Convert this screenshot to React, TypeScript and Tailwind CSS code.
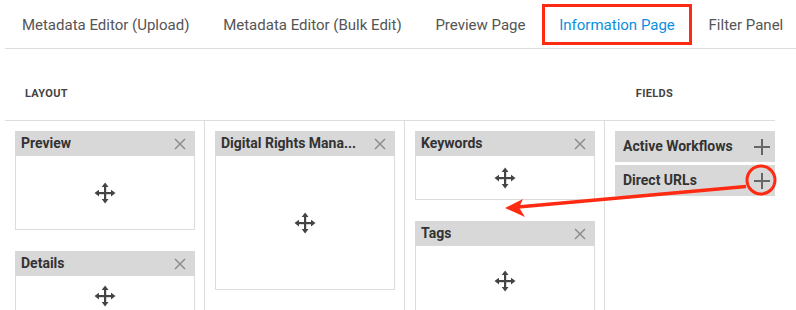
import { ReactNode } from "react";

const tabs = [
  "Metadata Editor (Upload)",
  "Metadata Editor (Bulk Edit)",
  "Preview Page",
  "Information Page",
  "Filter Panel",
];

function MoveIcon() {
  return (
    <svg width="22" height="22" viewBox="0 0 22 22" fill="#444">
      <rect x="10" y="4" width="2.2" height="14" />
      <rect x="4" y="10" width="14" height="2.2" />
      <polygon points="11.1,0.5 14.5,5 7.7,5" />
      <polygon points="11.1,21.5 14.5,17 7.7,17" />
      <polygon points="0.5,11.1 5,7.7 5,14.5" />
      <polygon points="21.5,11.1 17,7.7 17,14.5" />
    </svg>
  );
}

function CloseIcon() {
  return (
    <svg width="12" height="12" viewBox="0 0 12 12" stroke="#8a8a8a" strokeWidth="1.4">
      <line x1="1" y1="1" x2="11" y2="11" />
      <line x1="11" y1="1" x2="1" y2="11" />
    </svg>
  );
}

function PlusIcon() {
  return (
    <svg width="18" height="18" viewBox="0 0 18 18" stroke="#666" strokeWidth="2">
      <line x1="9" y1="1" x2="9" y2="17" />
      <line x1="1" y1="9" x2="17" y2="9" />
    </svg>
  );
}

function Card({ title, bodyHeight, children }: { title: string; bodyHeight: string; children?: ReactNode }) {
  return (
    <div className="w-[180px]">
      <div className="h-[25px] bg-[#d8d8d8] flex items-center justify-between pl-[6px] pr-[9px]">
        <span className="text-[14px] font-bold text-[#333] truncate">{title}</span>
        <CloseIcon />
      </div>
      <div className={`border border-t-0 border-[#dcdcdc] flex items-center justify-center ${bodyHeight}`}>
        {children ?? <MoveIcon />}
      </div>
    </div>
  );
}

function FieldItem({ label }: { label: string }) {
  return (
    <div className="h-[31px] bg-[#d8d8d8] flex items-center justify-between pl-[8px] pr-[4px]">
      <span className="text-[14px] font-bold text-[#333]">{label}</span>
      <PlusIcon />
    </div>
  );
}

export default function App() {
  return (
    <div className="relative w-[796px] h-[310px] overflow-hidden bg-white font-['Roboto','Liberation_Sans',sans-serif]">
      <div className="ml-[5px] h-[49px] flex border-b border-[#dddddd]">
        {tabs.map((t) => (
          <div key={t} className="relative shrink-0 whitespace-nowrap px-[16.9px] pt-[3px] flex items-center text-[15px]">
            <span className={t === "Information Page" ? "text-[#0b8fe0]" : "text-[#555]"}>{t}</span>
            {t === "Information Page" && (
              <div className="absolute left-0 right-0 top-[4px] bottom-[3px] border-[3px] border-[#ff2a12]" />
            )}
          </div>
        ))}
      </div>

      <div className="h-[71px] flex items-end pb-[18px] text-[11px] font-bold text-[#444] tracking-[0.3px]">
        <span className="ml-[25px]">LAYOUT</span>
        <span className="ml-[568px]">FIELDS</span>
      </div>

      <div className="ml-[5px] w-[770px] h-[190px] border-t border-[#dddddd] flex">
        <div className="w-[200px] border-r border-[#dddddd] px-[10px] pt-[10px] flex flex-col gap-[21px]">
          <Card title="Preview" bodyHeight="h-[74px]" />
          <Card title="Details" bodyHeight="h-[60px] items-start pt-[9px]" />
        </div>
        <div className="w-[200px] border-r border-[#dddddd] px-[10px] pt-[10px]">
          <Card title="Digital Rights Mana..." bodyHeight="h-[134px]" />
        </div>
        <div className="w-[200px] border-r border-[#dddddd] px-[10px] pt-[10px] flex flex-col gap-[21px]">
          <Card title="Keywords" bodyHeight="h-[44px]" />
          <Card title="Tags" bodyHeight="h-[70px]" />
        </div>
        <div className="flex-1 pl-[10px] pt-[10px] flex flex-col gap-[3px]">
          <FieldItem label="Active Workflows" />
          <FieldItem label="Direct URLs" />
        </div>
      </div>

      <svg className="absolute left-0 top-0 pointer-events-none" width="796" height="310">
        <circle cx="761" cy="180" r="14" fill="none" stroke="#ff2a12" strokeWidth="3" />
        <line x1="746" y1="186.5" x2="518" y2="207" stroke="#ff2a12" strokeWidth="3.5" />
        <polygon points="505,208 523,199 519,207.5 525,217" fill="#ff2a12" />
      </svg>
    </div>
  );
}
